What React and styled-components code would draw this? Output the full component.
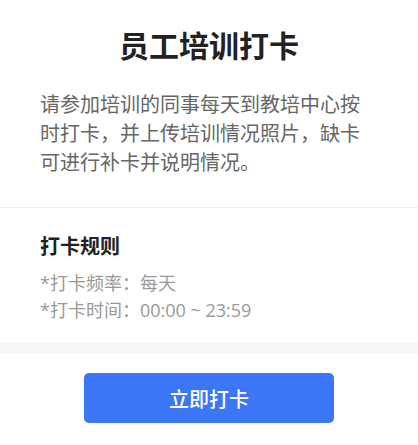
import React from "react";
import styled, { createGlobalStyle } from "styled-components";

const Global = createGlobalStyle`
  html, body { margin: 0; padding: 0; background: #fff; }
  body { font-family: "Noto Sans CJK SC", "Noto Sans", sans-serif; }
  * { box-sizing: border-box; }
`;

const Page = styled.div`
  width: 418px;
  height: 445px;
  display: flex;
  flex-direction: column;
  background: #fff;
  overflow: hidden;
`;

const Intro = styled.section`
  padding: 22px 40px 31px;
  border-bottom: 1px solid #eeeeee;
`;

const Title = styled.h1`
  margin: 0;
  font-size: 30px;
  line-height: 45px;
  font-weight: 700;
  color: #222;
  text-align: center;
`;

const Desc = styled.p`
  margin: 22px 0 0;
  font-size: 20px;
  line-height: 29px;
  color: #666;
`;

const Rules = styled.section`
  padding: 24px 40px 19px;
`;

const RulesTitle = styled.h2`
  margin: 0 0 10px;
  font-size: 20px;
  line-height: 28px;
  font-weight: 700;
  color: #222;
`;

const RuleLine = styled.div`
  font-family: "Open Sans", "Noto Sans CJK SC", sans-serif;
  font-size: 18px;
  line-height: 27px;
  color: #999;
`;

const Band = styled.div`
  height: 10px;
  background: #f7f8fa;
`;

const Footer = styled.div`
  display: flex;
  justify-content: center;
  padding: 20px 0;
`;

const Button = styled.button`
  width: 250px;
  height: 50px;
  border: none;
  border-radius: 5px;
  background: #3b76f6;
  color: #fff;
  font-family: inherit;
  font-size: 20px;
  font-weight: 500;
  cursor: pointer;
`;

export default function App() {
  return (
    <>
      <Global />
      <Page>
        <Intro>
          <Title>员工培训打卡</Title>
          <Desc>
            请参加培训的同事每天到教培中心按时打卡，并上传培训情况照片，缺卡可进行补卡并说明情况。
          </Desc>
        </Intro>
        <Rules>
          <RulesTitle>打卡规则</RulesTitle>
          <RuleLine>*打卡频率：每天</RuleLine>
          <RuleLine>*打卡时间：00:00 ~ 23:59</RuleLine>
        </Rules>
        <Band />
        <Footer>
          <Button>立即打卡</Button>
        </Footer>
      </Page>
    </>
  );
}
